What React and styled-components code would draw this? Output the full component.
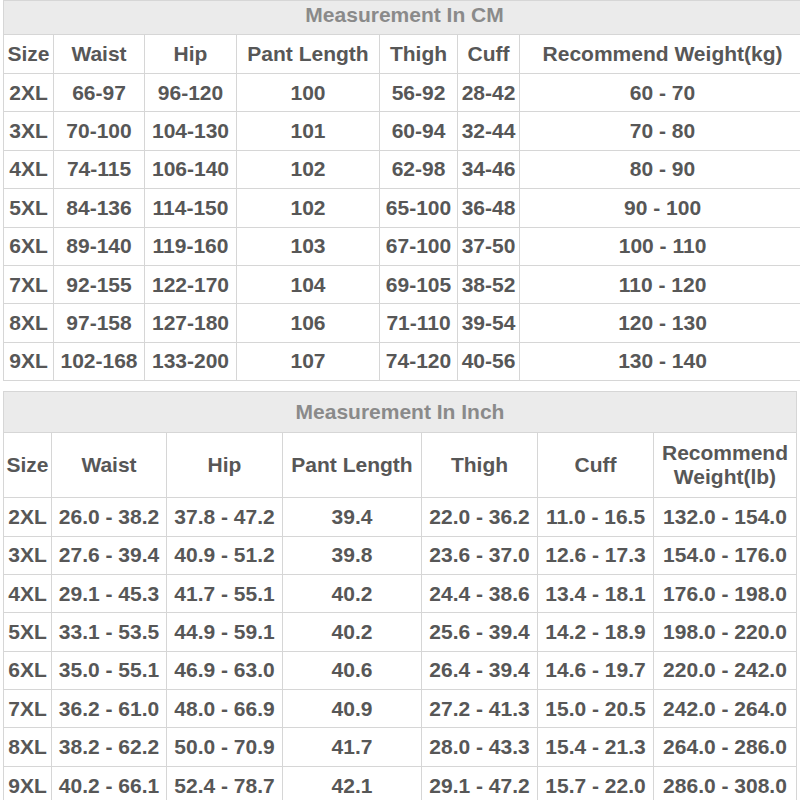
import React from 'react'
import styled, { createGlobalStyle } from 'styled-components'

const GlobalStyle = createGlobalStyle`
  html, body {
    margin: 0;
    padding: 0;
    background: #fff;
  }
  body {
    font-family: "Liberation Sans", Arial, sans-serif;
  }
`

const Page = styled.div`
  width: 800px;
  height: 800px;
  overflow: hidden;
  display: flex;
  flex-direction: column;
  gap: 10px;
  padding-left: 3px;
`

const Table = styled.table`
  border-collapse: collapse;
  table-layout: fixed;
  width: ${({ w }) => w}px;
  flex-shrink: 0;
  color: #575757;
  font-size: 21px;
  font-weight: bold;

  td, th {
    border: 1px solid #d6d6d6;
    padding: 0;
    text-align: center;
    vertical-align: middle;
    white-space: nowrap;
  }
`

const Band = styled.th`
  background: #ebebeb;
  color: #8a8a8a;
  height: ${({ h }) => h}px;
  padding-bottom: ${({ lift }) => lift || 0}px !important;
`

const HeadRow = styled.tr`
  height: ${({ h }) => h}px;
`

const HeadCell = styled.th`
  font-weight: bold;
  line-height: 24px;
  white-space: ${({ wrap }) => (wrap ? 'normal' : 'nowrap')} !important;
`

const Row = styled.tr`
  height: 38.4px;
`

const Cell = styled.td``

const cmCols = [50, 91, 92, 143, 78, 62, 286]
const cmHead = ['Size', 'Waist', 'Hip', 'Pant Length', 'Thigh', 'Cuff', 'Recommend Weight(kg)']
const cmRows = [
  ['2XL', '66-97', '96-120', '100', '56-92', '28-42', '60 - 70'],
  ['3XL', '70-100', '104-130', '101', '60-94', '32-44', '70 - 80'],
  ['4XL', '74-115', '106-140', '102', '62-98', '34-46', '80 - 90'],
  ['5XL', '84-136', '114-150', '102', '65-100', '36-48', '90 - 100'],
  ['6XL', '89-140', '119-160', '103', '67-100', '37-50', '100 - 110'],
  ['7XL', '92-155', '122-170', '104', '69-105', '38-52', '110 - 120'],
  ['8XL', '97-158', '127-180', '106', '71-110', '39-54', '120 - 130'],
  ['9XL', '102-168', '133-200', '107', '74-120', '40-56', '130 - 140'],
]

const inchCols = [48, 115, 116, 139, 116, 116, 143]
const inchHead = ['Size', 'Waist', 'Hip', 'Pant Length', 'Thigh', 'Cuff', 'Recommend Weight(lb)']
const inchRows = [
  ['2XL', '26.0 - 38.2', '37.8 - 47.2', '39.4', '22.0 - 36.2', '11.0 - 16.5', '132.0 - 154.0'],
  ['3XL', '27.6 - 39.4', '40.9 - 51.2', '39.8', '23.6 - 37.0', '12.6 - 17.3', '154.0 - 176.0'],
  ['4XL', '29.1 - 45.3', '41.7 - 55.1', '40.2', '24.4 - 38.6', '13.4 - 18.1', '176.0 - 198.0'],
  ['5XL', '33.1 - 53.5', '44.9 - 59.1', '40.2', '25.6 - 39.4', '14.2 - 18.9', '198.0 - 220.0'],
  ['6XL', '35.0 - 55.1', '46.9 - 63.0', '40.6', '26.4 - 39.4', '14.6 - 19.7', '220.0 - 242.0'],
  ['7XL', '36.2 - 61.0', '48.0 - 66.9', '40.9', '27.2 - 41.3', '15.0 - 20.5', '242.0 - 264.0'],
  ['8XL', '38.2 - 62.2', '50.0 - 70.9', '41.7', '28.0 - 43.3', '15.4 - 21.3', '264.0 - 286.0'],
  ['9XL', '40.2 - 66.1', '52.4 - 78.7', '42.1', '29.1 - 47.2', '15.7 - 22.0', '286.0 - 308.0'],
]

const SizeTable = ({ title, cols, head, rows, bandH, lift, headH, wrapLast }) => {
  const total = cols.reduce((a, b) => a + b, 0)
  return (
    <Table w={total}>
      <colgroup>
        {cols.map((c, i) => (
          <col key={i} style={{ width: c }} />
        ))}
      </colgroup>
      <thead>
        <tr>
          <Band colSpan={cols.length} h={bandH} lift={lift}>
            {title}
          </Band>
        </tr>
        <HeadRow h={headH}>
          {head.map((h, i) => (
            <HeadCell key={i} wrap={wrapLast && i === head.length - 1}>
              {wrapLast && i === head.length - 1 ? (
                <>
                  Recommend
                  <br />
                  Weight(lb)
                </>
              ) : (
                h
              )}
            </HeadCell>
          ))}
        </HeadRow>
      </thead>
      <tbody>
        {rows.map((r, i) => (
          <Row key={i}>
            {r.map((v, j) => (
              <Cell key={j}>{v}</Cell>
            ))}
          </Row>
        ))}
      </tbody>
    </Table>
  )
}

const App = () => {
  return (
    <>
      <GlobalStyle />
      <Page>
        <SizeTable
          title="Measurement In CM"
          cols={cmCols}
          head={cmHead}
          rows={cmRows}
          bandH={27}
          lift={6}
          headH={39}
        />
        <SizeTable
          title="Measurement In Inch"
          cols={inchCols}
          head={inchHead}
          rows={inchRows}
          bandH={40}
          headH={65}
          wrapLast
        />
      </Page>
    </>
  )
}

export default App
